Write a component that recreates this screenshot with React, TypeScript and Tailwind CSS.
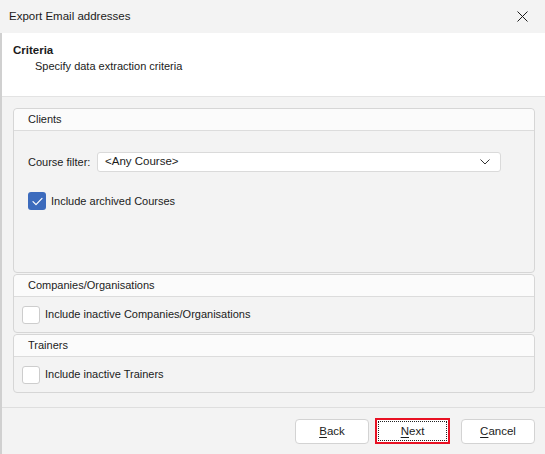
import React from "react";

const font = "font-['Segoe_UI','Liberation_Sans',Arial,sans-serif]";

function Check({ checked }: { checked?: boolean }) {
  if (checked) {
    return (
      <span className="flex h-[18px] w-[18px] items-center justify-center rounded-[3px] bg-[#3c6bbd]">
        <svg width="11" height="9" viewBox="0 0 11 9" fill="none">
          <path d="M1 4.6 L4 7.6 L10 1.4" stroke="#ffffff" strokeWidth="1.2" strokeLinecap="round" strokeLinejoin="round" />
        </svg>
      </span>
    );
  }
  return <span className="block h-[18px] w-[18px] rounded-[3px] border border-[#cdcdcd] bg-white" />;
}

function Group({ title, children, className }: { title: string; children: React.ReactNode; className?: string }) {
  return (
    <div className={`flex flex-col rounded-[4px] border border-[#d6d6d6] ${className ?? ""}`}>
      <div className="flex h-[22px] shrink-0 items-center rounded-t-[4px] border-b border-[#dcdcdc] bg-[#fbfbfb] pl-[14px]">{title}</div>
      {children}
    </div>
  );
}

function Btn({ under, rest, focused }: { under: string; rest: string; focused?: boolean }) {
  const inner = (
    <span className="text-[11.5px]">
      <span className="underline underline-offset-2">{under}</span>
      {rest}
    </span>
  );
  if (focused) {
    return (
      <div className="flex h-[26px] w-[75px] items-center justify-center border-2 border-[#e81123] bg-white p-[1px]">
        <div className="flex h-full w-full items-center justify-center border border-dotted border-[#222] pt-[1px]">{inner}</div>
      </div>
    );
  }
  return (
    <div className="flex h-[25px] w-[74px] items-center justify-center rounded-[4px] border border-[#d3d3d3] bg-white pt-[1px]">
      {inner}
    </div>
  );
}

export default function App() {
  return (
    <div className={`flex h-[454px] w-[545px] flex-col overflow-hidden bg-[#f3f3f3] text-[11px] text-[#1b1b1b] ${font}`}>
      {/* title bar */}
      <div className="flex h-[33px] shrink-0 items-center justify-between bg-[#f3f3f3] pl-[9px] pr-[17px]">
        <span className="text-[11.5px]">Export Email addresses</span>
        <svg width="11" height="11" viewBox="0 0 11 11">
          <path d="M0.5 0.5 L10.5 10.5 M10.5 0.5 L0.5 10.5" stroke="#1b1b1b" strokeWidth="1" />
        </svg>
      </div>

      <div className="flex flex-1 flex-col border-l-2 border-[#d0d0d0]">
        {/* header */}
        <div className="flex h-[64px] shrink-0 flex-col border-b border-[#e3e3e3] bg-white pl-[11px] pt-[9px]">
          <span className="text-[11.5px] font-bold leading-[16px]">Criteria</span>
          <span className="pl-[22px] leading-[16px]">Specify data extraction criteria</span>
        </div>

        {/* groups */}
        <div className="flex flex-1 flex-col gap-[1px] pl-[11px] pr-[10px] pt-[11px]">
          <Group title="Clients" className="h-[165px]">
            <div className="flex items-center pl-[14px] pt-[21px]">
              <span className="w-[69px]">Course filter:</span>
              <div className="flex h-[20px] w-[404px] items-center justify-between rounded-[3px] border border-[#dadada] bg-white pl-[7px] pr-[10px]">
                <span className="text-[11.5px]">&lt;Any Course&gt;</span>
                <svg width="10" height="6" viewBox="0 0 10 6" fill="none">
                  <path d="M0.5 0.5 L5 5 L9.5 0.5" stroke="#333" strokeWidth="1" />
                </svg>
              </div>
            </div>
            <div className="flex items-center gap-[5px] pl-[14px] pt-[20px]">
              <Check checked />
              <span>Include archived Courses</span>
            </div>
          </Group>

          <Group title="Companies/Organisations" className="h-[59px]">
            <div className="flex flex-1 items-center gap-[5px] pl-[8px]">
              <Check />
              <span>Include inactive Companies/Organisations</span>
            </div>
          </Group>

          <Group title="Trainers" className="h-[59px]">
            <div className="flex flex-1 items-center gap-[5px] pl-[8px]">
              <Check />
              <span>Include inactive Trainers</span>
            </div>
          </Group>
        </div>

        {/* footer */}
        <div className="flex h-[47px] shrink-0 items-start justify-end border-t border-[#dedede] pr-[10px] pt-[11px]">
          <Btn under="B" rest="ack" />
          <div className="ml-[6px] -mt-[1px]">
            <Btn under="N" rest="ext" focused />
          </div>
          <div className="ml-[11px]">
            <Btn under="C" rest="ancel" />
          </div>
        </div>
      </div>
    </div>
  );
}
